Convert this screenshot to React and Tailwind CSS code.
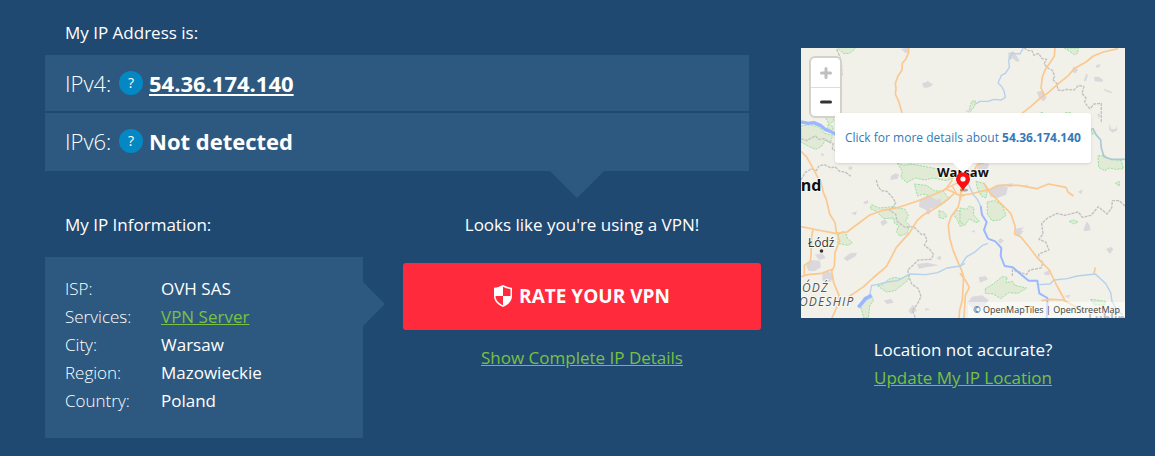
const ROAD = '#fbc88f';
const RIVER = '#9bb8ff';
const STREAM = '#b3d1ee';
const BORDER = '#c2c1c1';
const URBAN = '#dad8dc';

function Wood({ d }) {
  return <path d={d} fill="#e0ead5" stroke="#9de0a5" strokeWidth="3" strokeDasharray="7 3" />;
}

function MapDrawing() {
  return (
    <svg
      className="block w-full"
      viewBox="0 0 324 270"
      fill="none"
      role="img"
      aria-label="Map of Warsaw"
      fontFamily="'Open Sans', sans-serif"
    >
      <rect width="324" height="270" fill="#f1f0e9" />
      {/* north-west tile */}
      <g transform="translate(-6 -8) scale(.33333)" strokeLinejoin="round">
        <Wood d="M122 20l12 10 12 11 18-1 14-12 4-8z" />
        <Wood d="M18 258l26-4 30 8 14 18 25 6-6 20-16-6-10 18-18 10-20-8-25-14z" />
        <Wood d="M92 234l20-6 5 14-14 10 12 10-4 16-14-14 4-14z" />
        <Wood d="M306 368l20 8 24-4 30 6 44 8 8 20 44 8-22 8-40-8-24 6-30-6-24 14-18-16 4-18z" />
        <g fill={URBAN}>
          <path d="M382 130l12-4 4-4 6 6 10 4-8 8-14 4-8-4z" />
          <path d="M318 26l22-2 2 12-10 4z" />
          <path d="M136 142l6 8-4 8zM80 338l8 6-6 5-4-4zM162 378l12 4-6 8-8-2zM288 408l14-8 10 4-4 12-22 4z" />
        </g>
        <path d="M18 296l18 6 12-8 14-6 8 10 18-2 12 10 14 4-2 18 16 6 4 14 12 8M125 28l8 18 6 22 2 34-5 16M136 120v30l-6 30M18 420l12-22 20-12 14 6 8-14 16-4 20 10 12-4 14 14 16 2 20 14" stroke={BORDER} strokeWidth="4" strokeDasharray="9 3" />
        <path d="M18 246l22 4 16-2 20 8 14 12 16 6 18 10" stroke={RIVER} strokeWidth="10" />
        <path d="M341 24v14l-8 18-11 14-1 20-12 18-8 22 2 16-2 16 10 22 10 34" stroke={ROAD} strokeWidth="5" />
        <path d="M18 334l16 16 14 24 14 26 10 20" stroke={ROAD} strokeWidth="5" />
      </g>
      {/* north-east tile */}
      <g transform="translate(159 -8) scale(.33333)" strokeLinejoin="round">
        <Wood d="M313 24l16 10 14 10 10-4 2-16z" />
        <Wood d="M414 348l20-2 12 10 38 6 6 24-24 2-18-4-14 8-18-10z" />
        <Wood d="M36 184l10-2-2 16-12 16-4-10z" />
        <Wood d="M392 264l14 12-8 8zM316 218h20M242 218h10" />
        <g fill={URBAN}>
          <path d="M145 38l16-4 18 28-8 4-14-12-4 6-8-4zM230 156l16-4 14 20-8 12-14-8zM340 80l14 8-6 12-12-4zM378 102l6 2-6 20-6-2zM402 112l14-2 14 10-4 6-22-2zM408 76l14-4-4 10-8 2zM432 146l24 10-2 4-20-8zM412 222h10l-6 14zM448 250l6 18 14-2 2-10 2 14-14 8-10-8zM54 368l34 4-8 18-30 2zM14 212l20-2-6 8z" />
        </g>
        <path d="M192 24l14 8 10 0 6 14 14-6 10 16 14 2-8 14 12 12 14 8 6 18-6 8 12 12 4 20 14 2 10-4 24 2 14-14 16 4-6 20 12 14-4 12 8 12 8 8 12-14 22-2v60" stroke={BORDER} strokeWidth="4" strokeDasharray="9 3" />
        <path d="M190 24l-10 18-24-2-10 20 2 22-12 18-12 6-10 24 10 8 8 14 4 20-12 8-22-2-18 6-24 0-14 8" stroke={STREAM} strokeWidth="4" />
        <path d="M398 264l10 20 14 16 2 24 8 26 22 8h42" stroke="#a8c9d6" strokeWidth="5" />
        <path d="M285 24l-2 24-14 22-14 20-8 22-4 32 8 16-2 10" stroke={ROAD} strokeWidth="5" />
        <path d="M474 26l-44 10-30 12-22 18-36 20-16 20-30 24-36 32-10 4-38 34-26 20" stroke={ROAD} strokeWidth="5" />
        <path d="M72 368l-20 6-8 14-14 14-22 20" stroke={ROAD} strokeWidth="5" />
      </g>
      {/* south-west tile */}
      <g transform="translate(-6 132) scale(.33333)" strokeLinejoin="round">
        <Wood d="M230 74l22 10 42-4 36 8 10 18-8 18 12 12-8 24-22 8-10-14 8-18-14-6-2-16-30 2-22-22-18-8z" />
        <Wood d="M130 164l14-10 8 4 6 18 14 12-12 8-32-6z" />
        <Wood d="M248 318l16-4 16-16 20-6 18 4 26-14-6 20-18 14-20 16-26 4-14-10z" />
        <Wood d="M196 376l12-24 20-4 8 12-12 18-4 36h-14z" />
        <Wood d="M358 12l36 4 24 16 28 2 10 16 10 4-20 16-14 8-20-14-12-18-16-4-16 6z" />
        <Wood d="M432 92l14 4 10 12-12 8-12-4zM482 90l28 6v36l-14 8-10-22-10-14z" />
        <g fill={URBAN}>
          <path d="M374 60l20-12 16 4 14 8 14-4v16l-14 10-18 4-6 10-12-8-16-8zM34 258l12-18 28 2 4 20-20 12-18-2zM82 276l20-2 14 16-10 16-24-4zM60 224l22-4 10 14-20 6zM146 234l20-14 20-2-4 10-26 16zM256 126l14-8 8 10-16 10zM206 66l12-6 2 10-14 2zM168 100l18-6-4 12zM266 362l22-6 8 12-20 4zM340 392l14-18 12 18-18 10zM390 384l16 4-14 4zM428 230l10-2v12l-12-4zM366 252l30-4 36 8-40 6-20 4zM398 86l12 8-10 10-8-6z" />
        </g>
        <path d="M244 0l4 16 10 16 18 2 18 20 8 14-10 16-8 8 18 10 4 22 24 18 26-2 24 24 8-2 8 18-8 16 16 12 12 16-8 14-38 2-14 14-18 16 4 20 8 22 20 14 8 24-12 24-14 18 8 18-10 20" stroke={BORDER} strokeWidth="4" strokeDasharray="9 3" />
        <path d="M510 250l-14 8-40 6-28 14-36 6-48-2-36 20-32 4-30 8-16 2-6 30" stroke={STREAM} strokeWidth="4" />
        <path d="M230 346l-18 10-22 26" stroke={RIVER} strokeWidth="11" />
        <path d="M76 0l10 40 8 18 10 44 16 26 4 28 10 26-14 36-2 40-8 16 6 34 16 38-2 26-20 44" stroke={ROAD} strokeWidth="5" />
        <path d="M18 140l50 10 54 10 34-4 40-30 30-22 34-12 52-10 58-20 50-20 32-14 20-28" stroke={ROAD} strokeWidth="5" />
        <path d="M54 150l-4 18-2 56-2 20-18 12v28M18 290l20-6 42-4 32-12" stroke={ROAD} strokeWidth="5" />
        <path d="M478 40l-22 20-34 24-36 20-20 18-22 36-40 44-16 32-14 26-40 34-28 26-44 30" stroke={ROAD} strokeWidth="5" />
        <path d="M448 26l22 8 18 10 20 4M498 44l-8 36-22 30-8 26 4 38 10 36 14 34 12 28 6 18-4 70-8 30-2 24" stroke={ROAD} strokeWidth="5" />
        <path d="M456 24l28-14 20 0M470 16l16 26" stroke={ROAD} strokeWidth="4" />
      </g>
      {/* south-east tile */}
      <g transform="translate(159 132) scale(.33333)" strokeLinejoin="round">
        <Wood d="M48 4l24 6 10 20-4 24-14-6-12-24z" />
        <Wood d="M82 66l22-4 22 14 12 30-18 14-24 2-14-20z" />
        <Wood d="M0 84l20 4 8-10 14 6-2 20 18 20-10 4-20-12-14 20-14-10z" />
        <Wood d="M76 326l24-14 26-22 16 2-4 16 20-4 6 12 36 8-26 16-28-2-24 18-22-14-24-2z" />
        <Wood d="M328 124l14-4 12 6-12 6zM466 10l12-6v14zM392 358l44 6-2 12-30-2z" />
        <g fill={URBAN}>
          <path d="M84 34l26-20 34 8-6 22-26 10-20-4zM120 14l40-4-6 12zM184 18l20-4-4 8zM168 146l24-4-10 10h10l-16 18-10-6zM370 150l10-26 8 10 4 16-14 4zM438 208l14-8 8 8-10 14zM114 182l8-8 10 8-12 10zM34 154l10-4v8zM254 276l18-6-4 16-16-2zM56 292l20-4 8 10-24 10zM22 370l14-20 30-4 20 14-14 20-34 4zM312 348l20-4-6 10zM354 36l14-8-4 14z" />
        </g>
        <path d="M495 78l-18-16-20 0-2 22-14 18-26-22-22 26-26 6-12-16-40 10-24-6-28 14-18 16 4 32-12 16 20 8 10 24-30 12-2 14 14 12-6 16-34 6-10 14-20-8-22-6v18" stroke={BORDER} strokeWidth="4" strokeDasharray="9 3" />
        <path d="M24 10l16 34 12 14 10 20" stroke={STREAM} strokeWidth="4" />
        <path d="M62 78l4 26 14 22-8 24 12 26 22 8 18 20-2 24 12 30 24 4 26 22 22 18 26 0 6 38 24 14v24l-2 36" stroke={RIVER} strokeWidth="6" />
        <path d="M84 190l-16 6-26 22-22 12-20 30M238 314l32-2 12-12 40-4 30-8 54-6 22 20 10 10 14 26 4 26 14 26 18 14" stroke={STREAM} strokeWidth="4" />
        <path d="M0 46l30-4 60-14 26-12 60 0 54 10 36-14 52 10 6 14 16 12M72 10l20 30 34 34 26 26 14 40-2 22 18 8 26 32 26 34 34 34 20 42 26 48" stroke={ROAD} strokeWidth="5" />
        <path d="M0 280l18 24 10 18-12 24-4 68M244 362l26-4 40 2 40 22 30 14M402 280l4-18" stroke={ROAD} strokeWidth="5" />
        <path d="M0 60l6-60" stroke={ROAD} strokeWidth="6" />
      </g>
      <g fill="#111" stroke="#f8f7f2" strokeWidth="2" paintOrder="stroke">
        <text x="-10" y="143" fontSize="16" fontWeight="700">and</text>
        <text x="136" y="129" fontSize="13" fontWeight="700">Warsaw</text>
        <text x="7" y="199" fontSize="12" fontWeight="500" fill="#333">Łódź</text>
        <g className="tracking-widest" fontSize="12" fontStyle="italic" fill="#555">
          <text x="1" y="244">ÓDŹ</text>
          <text x="-2" y="258">ODESHIP</text>
        </g>
        <text x="287" y="275" fontSize="12" fontWeight="700" fill="#777">Lublin</text>
      </g>
      <circle cx="20.500" cy="203" r="1.800" fill="#333" />
      <ellipse cx="163" cy="142" rx="4" ry="1.500" fill="#000" opacity=".3" />
      <path d="M162 143c-2-5-7-7-7-12a7 7 0 0 1 14 0c0 5-5 7-7 12z" fill="#fb0d10" />
      <circle cx="162" cy="131" r="2.600" fill="#fff" />
    </svg>
  );
}

function LocationMap() {
  return (
    <div className="relative overflow-hidden">
      <MapDrawing />
      <div className="absolute left-2 top-2 flex flex-col rounded-md border-2 border-[#d2d2cb] bg-white">
        <button type="button" aria-label="Zoom in" className="flex h-[30px] w-[29px] items-center justify-center border-b border-[#ddd]">
          <svg width="12" height="12" viewBox="0 0 12 12" stroke="#bfbfbf" strokeWidth="3" strokeLinecap="round">
            <path d="M1.500 6h9M6 1.500v9" />
          </svg>
        </button>
        <button type="button" aria-label="Zoom out" className="flex h-[28px] w-[29px] items-center justify-center">
          <svg width="12" height="12" viewBox="0 0 12 12" stroke="#333" strokeWidth="3" strokeLinecap="round">
            <path d="M1.500 6h9" />
          </svg>
        </button>
      </div>
      <div className="absolute left-[34px] top-[65px] flex flex-col items-center">
        <a href="#details" className="block whitespace-nowrap rounded-[3px] bg-white px-[10px] py-[15px] text-[12px] leading-5 text-[#337ab7] shadow-sm">
          Click for more details about <b className="font-bold">54.36.174.140</b>
        </a>
        <svg width="20" height="10" viewBox="0 0 20 10" fill="#fff" aria-hidden="true">
          <path d="M0 0h20L10 10z" />
        </svg>
      </div>
      <p className="absolute bottom-0 right-0 bg-white/50 px-[5px] text-[9px] leading-4 text-[#404040]">
        <a href="#tiles">© OpenMapTiles</a> | <a href="#osm">OpenStreetMap</a>
      </p>
    </div>
  );
}

function Shield() {
  return (
    <svg width="18" height="22" viewBox="0 0 18 22" fill="#fff" aria-hidden="true">
      <path fillRule="evenodd" d="M9 0c3 1.700 6 2.500 9 2.800V11c0 5-3.600 8.700-9 11C3.600 19.700 0 16 0 11V2.800C3 2.500 6 1.700 9 0zM9 1.800V11h7.500V4.200C13.800 3.800 11.300 3 9 1.800zM9 11H1.500c.2 4.200 3.100 7.200 7.500 9.300z" />
    </svg>
  );
}

function AddressRow({ label, children }) {
  return (
    <div className="flex items-center gap-[6px] bg-[#2d5980] px-5 py-3 text-[22px] leading-8 text-white">
      <span className="min-w-12 font-light">{label}</span>
      <button type="button" aria-label={`What is ${label}`} className="flex size-6 items-center justify-center rounded-full bg-[#0488c4] text-[14px] leading-6">
        ?
      </button>
      {children}
    </div>
  );
}

const info = [
  ['ISP:', 'OVH SAS'],
  ['Services:', 'VPN Server', true],
  ['City:', 'Warsaw'],
  ['Region:', 'Mazowieckie'],
  ['Country:', 'Poland'],
];

export default function App() {
  return (
    <main className="flex min-h-screen items-start gap-10 bg-[#204972] pl-[45px] pr-[30px] font-['Open_Sans',sans-serif] text-[17px] leading-7 text-white">
      <section className="min-w-0 flex-1 pb-[18px] pt-[19px]">
        <h2 className="px-5">My IP Address is:</h2>
        <div className="relative mr-3 mt-2 bg-[#2d5980] pb-[2px]">
          <div className="border-b-2 border-[#204972]">
            <AddressRow label="IPv4:">
              <a href="#ip" className="font-bold underline decoration-2 underline-offset-2">54.36.174.140</a>
            </AddressRow>
          </div>
          <AddressRow label="IPv6:">
            <span className="font-bold">Not detected</span>
          </AddressRow>
          <svg className="absolute right-[145px] top-full" width="54" height="27" viewBox="0 0 54 27" fill="#2d5980" aria-hidden="true">
            <path d="M0 0h54L27 27z" />
          </svg>
        </div>
        <div className="mt-10 flex items-start gap-10">
          <section className="w-[318px]">
            <h2 className="px-5">My IP Information:</h2>
            <div className="relative mt-[18px] bg-[#2d5980] px-5 pb-[23px] pt-[18px]">
              <dl className="grid grid-cols-[96px_1fr]">
                {info.map(([name, value, link]) => (
                  <div key={name} className="contents">
                    <dt className="font-light">{name}</dt>
                    <dd>{link ? <a href="#vpn" className="text-[#7ac143] underline">{value}</a> : value}</dd>
                  </div>
                ))}
              </dl>
              <svg className="absolute left-full top-[25px]" width="22" height="44" viewBox="0 0 22 44" fill="#2d5980" aria-hidden="true">
                <path d="M0 0v44l22-22z" />
              </svg>
            </div>
          </section>
          <section className="flex flex-1 flex-col items-center">
            <p>Looks like you're using a VPN!</p>
            <button type="button" className="mt-6 flex h-[67px] w-full items-center justify-center gap-[7px] rounded-[3px] bg-[#ff2a3b] pb-[2px] text-[19px] font-bold">
              <Shield />
              RATE YOUR VPN
            </button>
            <a href="#complete" className="mt-[14px] text-[#7ac143] underline">Show Complete IP Details</a>
          </section>
        </div>
      </section>
      <aside className="w-[324px] shrink-0 pt-12">
        <LocationMap />
        <div className="mt-[18px] flex flex-col items-center">
          <p>Location not accurate?</p>
          <a href="#update" className="text-[#7ac143] underline">Update My IP Location</a>
        </div>
      </aside>
    </main>
  );
}
